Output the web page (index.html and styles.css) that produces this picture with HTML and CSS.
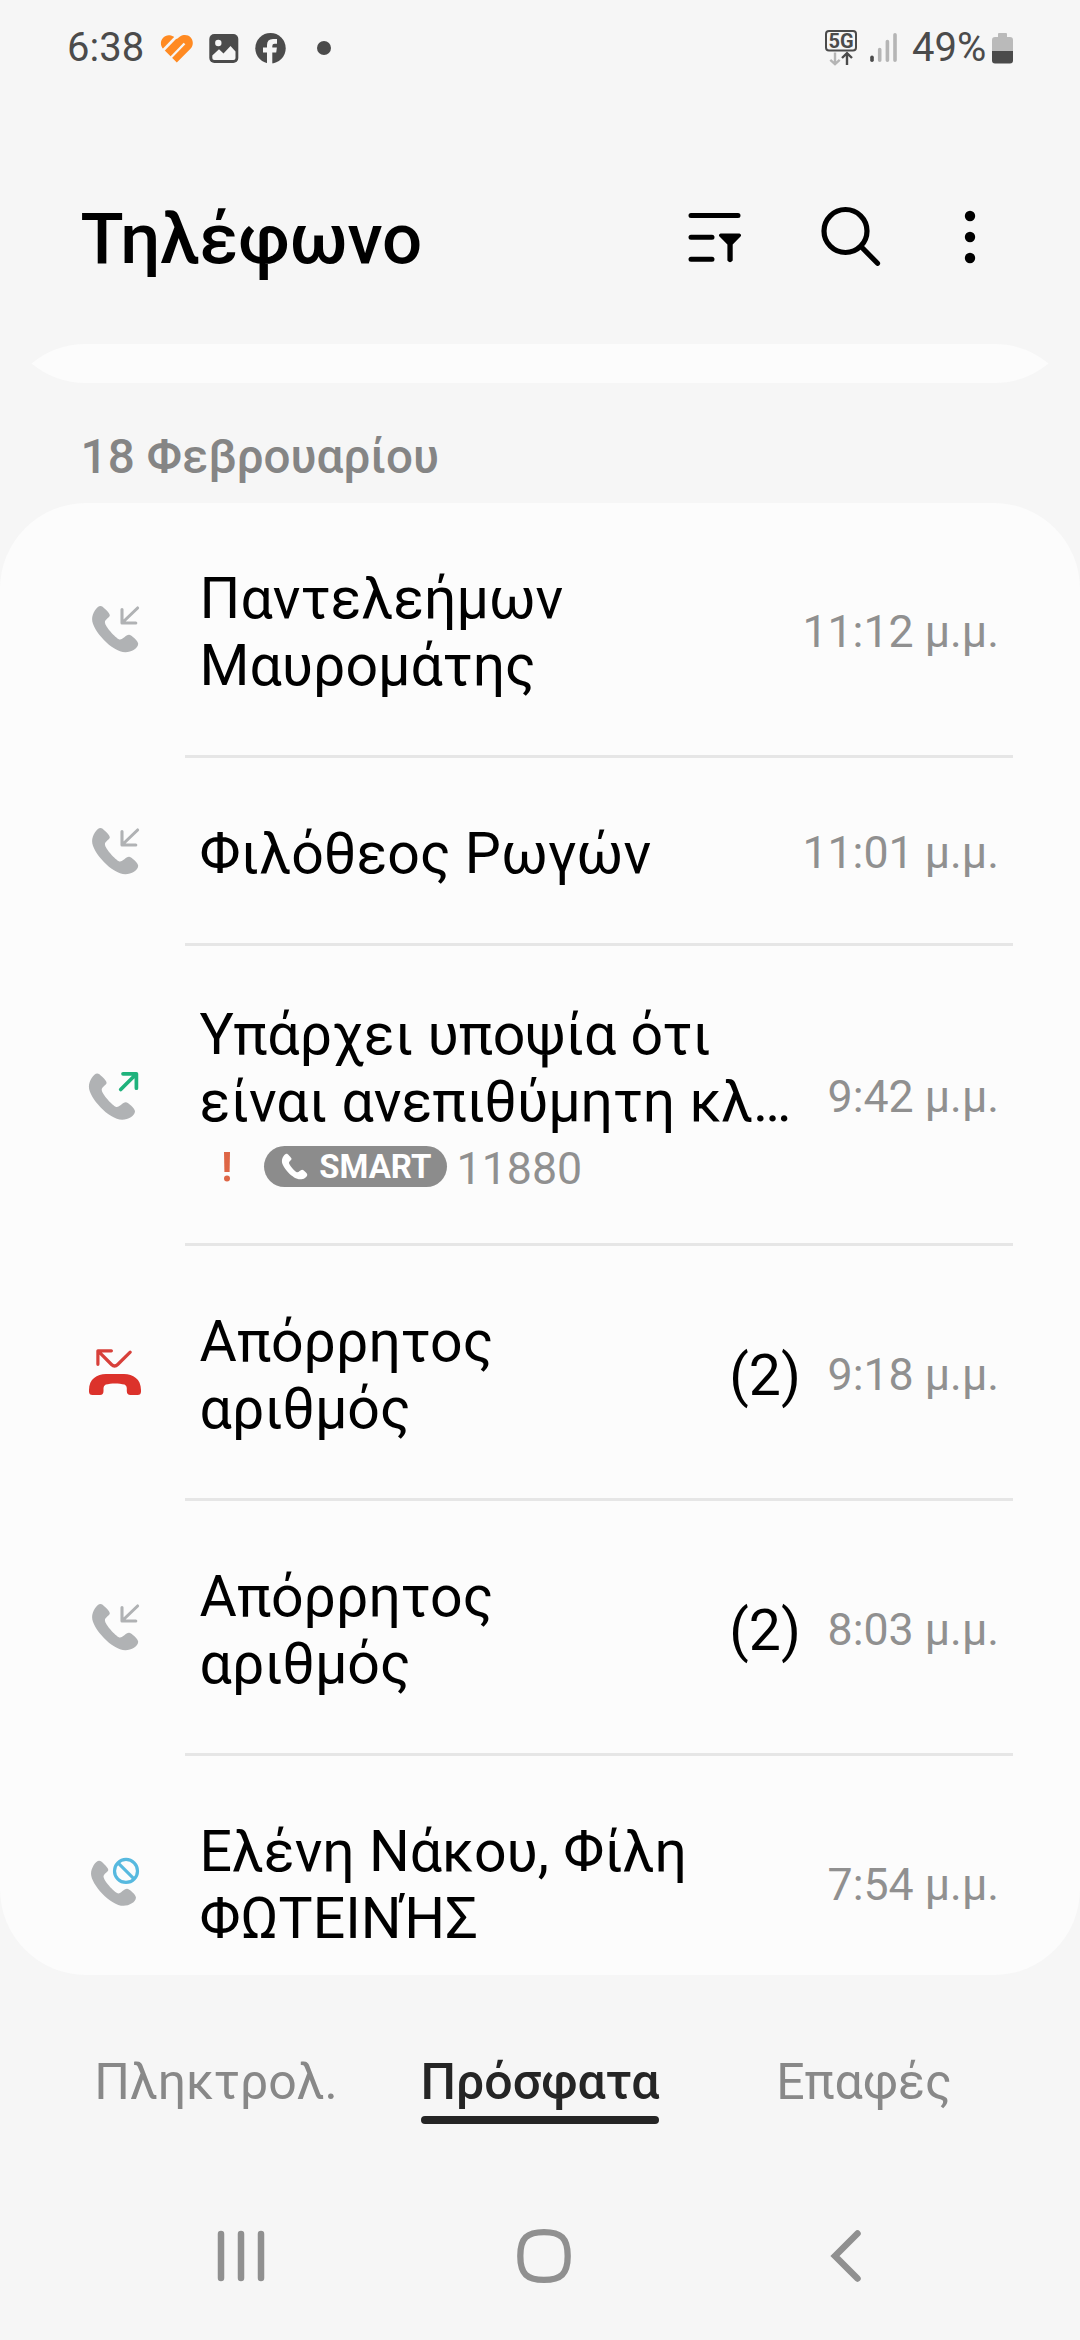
FILE: index.html
```html
<!DOCTYPE html>
<html lang="el">
<head>
<meta charset="utf-8">
<title>Τηλέφωνο</title>
<link rel="stylesheet" href="styles.css">
</head>
<body>
<svg class="defs" width="0" height="0" aria-hidden="true">
  <symbol id="handset" viewBox="0 0 60 60">
    <path d="M15.4 7C17 7 18.2 8.2 20.4 10.3C23 12.8 24.9 15 24.8 16.5C24.6 18.5 19.9 20.5 19.9 23.3C20 27.5 30.5 39 34.3 40.4C37.5 41.3 40.5 35.7 44 35.7C46.3 35.7 53.3 42 53.2 44.8C53 49.5 46.5 53.3 40.4 53.3C27 53.3 7.1 31 7.1 20.3C7.1 14.5 11.9 7 15.4 7Z"/>
  </symbol>
  <symbol id="incoming" viewBox="0 0 60 60">
    <use href="#handset" width="60" height="60" fill="#b0b2b4"/>
    <path d="M37 10.6V24H50.8M38 23L52.6 9" fill="none" stroke="#b0b2b4" stroke-width="3.1" stroke-linecap="round" stroke-linejoin="round"/>
  </symbol>
</svg>

<header class="status">
  <span class="clock">6:38</span>
  <svg class="heart" width="34" height="34" viewBox="0 0 34 34">
    <path d="M16.8 31.6L3 17.8C-3 10.5 5 .3 13.5 5.6L16.8 8L20 5.6C28.5 .3 37 10 30.5 17.8Z" fill="#ff8a22"/>
    <path d="M2.5 20L17.5 4.5" stroke="#f6f6f6" stroke-width="2.6" fill="none"/>
    <path d="M10 27.500L24.500 12.500" stroke="#f6f6f6" stroke-width="2.300" fill="none"/>
  </svg>
  <svg class="photo" width="30" height="34" viewBox="0 0 30 34">
    <rect x=".3" y="3" width="29" height="29" rx="5" fill="#4b4b4b"/>
    <circle cx="9.300" cy="12" r="3.200" fill="#f6f6f6"/>
    <path d="M3.300 24.500L10 18.300L14.500 22.500L21.500 15L26.500 20.500V27Q26.500 29 24.500 29H5.300Q3.300 29 3.300 27Z" fill="#f6f6f6"/>
  </svg>
  <svg class="fb" width="31" height="34" viewBox="0 0 31 34">
    <circle cx="15.500" cy="17.200" r="15.200" fill="#4b4b4b"/>
    <path d="M12 33V21.500H8V16.500H12V14Q12 8 18 8H22V12.700H19.500Q17.300 12.700 17.300 15V16.500H21.900L21.200 21.500H17.300V33Z" fill="#f6f6f6"/>
  </svg>
  <i class="more-dot"></i>
  <span class="status-space"></span>
  <svg class="net" width="34" height="38" viewBox="0 0 34 38">
    <rect x="1" y="2" width="30" height="19.500" rx="3" fill="none" stroke="#4b4b4b" stroke-width="2"/>
    <text x="16" y="18.600" text-anchor="middle" class="net-text">5G</text>
    <path d="M10 23.500V35M5.300 30.800L10 35.200L14.700 30.800" fill="none" stroke="#b5b5b5" stroke-width="2.400"/>
    <path d="M22 36V24.500M17 29L22 24.200L27 29" fill="none" stroke="#4b4b4b" stroke-width="2.400"/>
  </svg>
  <svg class="signal" width="28" height="34" viewBox="0 0 28 34" stroke-width="3.600" stroke-linecap="round">
    <path d="M2 26.300V29.300" stroke="#4b4b4b"/>
    <path d="M9.700 18.500V29.300M17.400 10.500V29.300M25 3.800V29.300" stroke="#b5b5b5"/>
  </svg>
  <span class="percent">49%</span>
  <svg class="battery" width="21" height="34" viewBox="0 0 21 34">
    <path d="M6 6V3Q6 2 7 2H14Q15 2 15 3V6H18Q21 6 21 9V20H0V9Q0 6 3 6Z" fill="#bababa"/>
    <path d="M0 20H21V29.600Q21 32.600 18 32.600H3Q0 32.600 0 29.600Z" fill="#4b4b4b"/>
  </svg>
</header>

<div class="title-bar">
  <h1>Τηλέφωνο</h1>
  <svg class="filter" width="54" height="54" viewBox="0 0 54 54">
    <path d="M3 5.500H50M3 27.300H24M3 49.200H24" stroke="#000" stroke-width="5" stroke-linecap="round"/>
    <path d="M32.500 23.600H51.500Q54 24.500 52.500 26.500L44.700 34.500V50.500Q42 54 39.400 50.500V34.500L31.500 26.500Q30 24.500 32.500 23.600Z"/>
  </svg>
  <svg class="search" width="60" height="60" viewBox="0 0 60 60" fill="none" stroke="#000" stroke-width="5.200">
    <circle cx="24.500" cy="25" r="21.500"/>
    <path d="M40 40.500L56.500 57.300" stroke-linecap="round"/>
  </svg>
  <svg class="menu" width="12" height="54" viewBox="0 0 12 54">
    <circle cx="6" cy="6" r="5.200"/><circle cx="6" cy="27" r="5.200"/><circle cx="6" cy="48" r="5.200"/>
  </svg>
</div>

<svg class="previous-card" width="1080" height="39" viewBox="0 0 1080 39">
  <path d="M31.500 19.500A86 86 0 0 1 86 0H994A86 86 0 0 1 1048.500 19.500A86 86 0 0 1 994 39H86A86 86 0 0 1 31.500 19.500Z" fill="#fcfcfc"/>
</svg>

<h2>18 Φεβρουαρίου</h2>

<main class="calls">
  <article class="call">
    <svg class="kind" viewBox="0 0 60 60"><use href="#incoming" width="60" height="60"/></svg>
    <div class="caller">Παντελεήμων<br>Μαυρομάτης</div>
    <time>11:12 μ.μ.</time>
  </article>
  <article class="call">
    <svg class="kind" viewBox="0 0 60 60"><use href="#incoming" width="60" height="60"/></svg>
    <div class="caller">Φιλόθεος Ρωγών</div>
    <time>11:01 μ.μ.</time>
  </article>
  <article class="call">
    <svg class="kind" viewBox="0 0 60 60">
      <use href="#handset" x="-3.200" y="1.500" width="60" height="60" fill="#b0b2b4"/>
      <path d="M38 8.800H51.400V23.200M51 9.200L35.700 24.500" fill="none" stroke="#1fb27c" stroke-width="3.700" stroke-linecap="round" stroke-linejoin="round"/>
    </svg>
    <div class="caller caller-spam">Υπάρχει υποψία ότι<br>είναι ανεπιθύμητη κλ…
      <div class="detail">
        <svg class="alert" width="10" height="32" viewBox="0 0 10 32" fill="#de6646"><path d="M2 1H8L7.600 21H2.400Z"/><circle cx="5" cy="27.500" r="3"/></svg>
        <span class="badge"><svg width="33" height="33" viewBox="0 0 60 60" fill="#fff"><use href="#handset" width="60" height="60"/></svg>SMART</span>
        <span class="number">11880</span>
      </div>
    </div>
    <time>9:42 μ.μ.</time>
  </article>
  <article class="call">
    <svg class="kind" viewBox="0 0 60 60">
      <path d="M26.400 8.800H12.900V22.300M13.500 9.400L26.500 22.500Q29.600 25.500 32.700 22.500L45.200 10.200" fill="none" stroke="#d8403a" stroke-width="3.200" stroke-linecap="round" stroke-linejoin="round"/>
      <path d="M7.500 53Q4 53 4 49.500V48C4 37 12 32 21 32H39C48 32 56 37 56 48V49.500Q56 53 52.500 53H45.500Q41.800 53 41.800 49V46Q41.800 43.500 39.500 42.500C34 41 26 41 20.800 42.500Q18.500 43.500 18.500 46V49Q18.500 53 15 53Z" fill="#dc322b"/>
    </svg>
    <div class="caller">Απόρρητος<br>αριθμός</div>
    <span class="count">(2)</span>
    <time>9:18 μ.μ.</time>
  </article>
  <article class="call">
    <svg class="kind" viewBox="0 0 60 60"><use href="#incoming" width="60" height="60"/></svg>
    <div class="caller">Απόρρητος<br>αριθμός</div>
    <span class="count">(2)</span>
    <time>8:03 μ.μ.</time>
  </article>
  <article class="call">
    <svg class="kind" viewBox="0 0 60 60">
      <use href="#handset" x="-.9" y="1.900" width="58.500" height="58.500" fill="#b0b2b4"/>
      <circle cx="41" cy="18.900" r="11.500" fill="none" stroke="#57b9df" stroke-width="3.200"/>
      <path d="M33 10.900L49 26.900" stroke="#57b9df" stroke-width="3.200"/>
    </svg>
    <div class="caller">Ελένη Νάκου, Φίλη<br>ΦΩΤΕΙΝΉΣ</div>
    <time>7:54 μ.μ.</time>
  </article>
</main>

<nav class="tabs">
  <div class="tab"><span>Πληκτρολ.</span></div>
  <div class="tab tab-active"><span>Πρόσφατα</span></div>
  <div class="tab"><span>Επαφές</span></div>
</nav>

<footer class="system-nav">
  <svg width="60" height="60" viewBox="0 0 60 60" fill="none" stroke="#909090" stroke-width="6.500" stroke-linecap="round"><path d="M10 8V52M30 8V52M50 8V52"/></svg>
  <svg width="60" height="60" viewBox="0 0 60 60" fill="none" stroke="#909090" stroke-width="6.300"><path d="M30 6.200C47 6.200 53.700 12 53.700 30S47 53.800 30 53.800S6.300 48 6.300 30S13 6.200 30 6.200Z"/></svg>
  <svg width="60" height="60" viewBox="0 0 60 60" fill="none" stroke="#909090" stroke-width="6.500" stroke-linecap="round"><path d="M41.500 7.500L19 30L41.500 52.500"/></svg>
</footer>
</body>
</html>
```
FILE: styles.css
```css
* { box-sizing: border-box; }

body {
  width: 1080px;
  height: 2340px;
  margin: 0;
  overflow: hidden;
  background: #f6f6f6;
  color: #000;
  font-family: Roboto, sans-serif;
  display: flex;
  flex-direction: column;
}

svg { display: block; flex: none; }
.defs { position: absolute; }

/* Status bar */
.status {
  height: 96px;
  padding: 0 67px;
  display: flex;
  align-items: center;
  color: #4b4b4b;
  font-size: 40px;
  line-height: 47px;
}
.clock { width: 77px; }
.clock, .percent { padding-bottom: 2px; }
.heart { margin-left: 16px; }
.photo { margin-left: 15px; }
.fb { margin-left: 16px; }
.more-dot { width: 14px; height: 14px; margin-left: 31px; border-radius: 50%; background: #4b4b4b; }
.status-space { flex: 1; }
.net { margin-right: 11px; }
.net-text { font: 700 20px Roboto, sans-serif; fill: #4b4b4b; }
.percent { width: 74px; margin: 0 6px 0 14px; }

/* Title */
.title-bar {
  height: 248px;
  padding: 101px 104px 0 80.6px;
  display: flex;
  align-items: flex-start;
}
h1 { margin: 0; flex: 1; font-weight: 500; font-size: 70.8px; line-height: 84px; }
.filter { margin: 13px 79px 0 0; }
.search { margin: 9px 83px 0 0; }
.menu { margin-top: 13px; }

h2 {
  height: 120px;
  margin: 0;
  padding: 46px 0 0 80.6px;
  font-weight: 500;
  font-size: 47.6px;
  line-height: 56px;
  color: #858585;
}

/* Call list */
.calls {
  height: 1472px;
  flex: none;
  overflow: hidden;
  border-radius: 86px;
  background: #fcfcfc;
}
.call {
  display: flex;
  align-items: center;
  padding: 0 81px 3px 85px;
  background: linear-gradient(#e6e6e6, #e6e6e6) 185px 100% / 828px 3px no-repeat;
}
.call:last-child { background: none; }
.kind { width: 60px; height: 60px; margin-right: 54.6px; }
.caller { flex: 1; padding: 62px 0 56px; font-size: 57.2px; line-height: 67px; white-space: nowrap; }
.caller-spam { padding: 55px 0 49px; }
.count { padding-top: 7px; margin-right: 26.6px; font-size: 57.2px; line-height: 67px; }
time { padding-top: 5px; font-size: 44.7px; line-height: 52px; color: #909090; }

.detail { display: flex; height: 52px; margin-top: 7px; align-items: flex-start; }
.alert { margin: 9px 0 0 22.6px; }
.badge {
  display: flex;
  align-items: center;
  width: 183px;
  height: 41px;
  margin: 4px 9.4px 0 32px;
  padding-left: 14px;
  border-radius: 21px;
  background: #8c8c8c;
  color: #fff;
  font-weight: 700;
  font-size: 33px;
  line-height: 41px;
}
.badge svg { margin-right: 8px; }
.number { padding-top: 1px; font-size: 44.7px; line-height: 52px; color: #909090; }

/* Tabs */
.tabs {
  height: 220px;
  padding: 77px 54px 0;
  display: grid;
  grid-template-columns: repeat(3, 1fr);
  justify-items: center;
  font-size: 50px;
  line-height: 60px;
  color: #888;
}
.tab span { display: block; padding-bottom: 4px; }
.tab-active { font-weight: 500; color: #252525; }
.tab-active::after { content: ""; display: block; height: 8px; border-radius: 4px; background: #252525; }

.system-nav { padding: 31px 204px 0 211px; display: flex; justify-content: space-between; }
```
